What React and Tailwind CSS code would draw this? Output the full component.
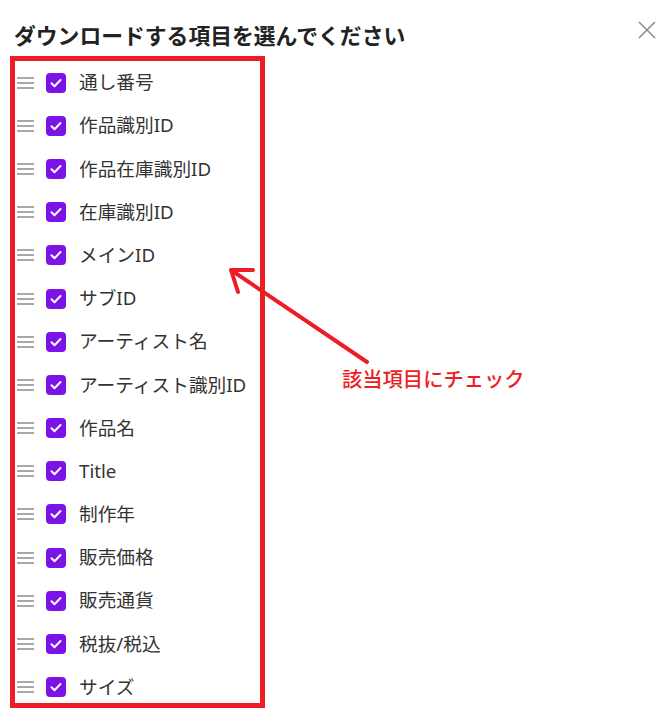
import { useState } from "react";

const FIELDS = [
  "通し番号",
  "作品識別ID",
  "作品在庫識別ID",
  "在庫識別ID",
  "メインID",
  "サブID",
  "アーティスト名",
  "アーティスト識別ID",
  "作品名",
  "Title",
  "制作年",
  "販売価格",
  "販売通貨",
  "税抜/税込",
  "サイズ",
];

const font = { fontFamily: '"Noto Sans", "Noto Sans CJK JP", sans-serif' };

const DragHandle = () => (
  <div className="flex w-[17px] shrink-0 flex-col gap-[3px]">
    <span className="h-[2px] w-full bg-[#a8a8a8]" />
    <span className="h-[2px] w-full bg-[#a8a8a8]" />
    <span className="h-[2px] w-full bg-[#a8a8a8]" />
  </div>
);

const Checkbox = ({ checked, onChange }) => (
  <button
    type="button"
    onClick={onChange}
    className={`grid h-[20px] w-[20px] shrink-0 place-items-center rounded-[4px] ${
      checked ? "bg-[#7b12e6]" : "border-2 border-[#999] bg-white"
    }`}
  >
    {checked && (
      <svg viewBox="0 0 20 20" className="h-[20px] w-[20px]" fill="none">
        <path
          d="M5.5 10.2l3 3 6-6.2"
          stroke="white"
          strokeWidth="2"
          strokeLinecap="round"
          strokeLinejoin="round"
        />
      </svg>
    )}
  </button>
);

export default function App() {
  const [checked, setChecked] = useState(FIELDS.map(() => true));

  const toggle = (i) =>
    setChecked((prev) => prev.map((v, j) => (j === i ? !v : v)));

  return (
    <div className="relative h-[715px] w-[670px] overflow-hidden bg-white" style={font}>
      {/* Header */}
      <div className="flex items-start justify-between pl-[14px] pr-[13px] pt-[19px]">
        <h2 className="text-[21.8px] font-bold leading-[34px] text-[#222]">
          ダウンロードする項目を選んでください
        </h2>
        <button type="button" className="mt-[1px] p-[1px]">
          <svg viewBox="0 0 18 18" className="h-[18px] w-[18px]" fill="none">
            <path d="M1 1l16 16M17 1L1 17" stroke="#8c8c8c" strokeWidth="1.6" />
          </svg>
        </button>
      </div>

      {/* Field list */}
      <ul className="mt-[8px] pl-[17px]">
        {FIELDS.map((label, i) => (
          <li key={label} className="flex h-[43.2px] items-center">
            <DragHandle />
            <div className="ml-[12px]">
              <Checkbox checked={checked[i]} onChange={() => toggle(i)} />
            </div>
            <span className="ml-[13px] text-[18.7px] leading-none text-[#333]">{label}</span>
          </li>
        ))}
      </ul>

      {/* Annotation: highlight box, arrow and note */}
      <div className="pointer-events-none absolute left-[10px] top-[56px] h-[652px] w-[255px] border-[5px] border-[#ee1d25]" />
      <svg
        className="pointer-events-none absolute left-0 top-0"
        width="670"
        height="715"
        fill="none"
      >
        <path
          d="M367 362L231 270M231 270L253 270M231 270L238 292"
          stroke="#ee1d25"
          strokeWidth="4"
          strokeLinecap="round"
          strokeLinejoin="round"
        />
      </svg>
      <div className="absolute left-[342px] top-[365px] text-[20.3px] font-medium leading-[28px] text-[#ee1d25]">
        該当項目にチェック
      </div>
    </div>
  );
}
